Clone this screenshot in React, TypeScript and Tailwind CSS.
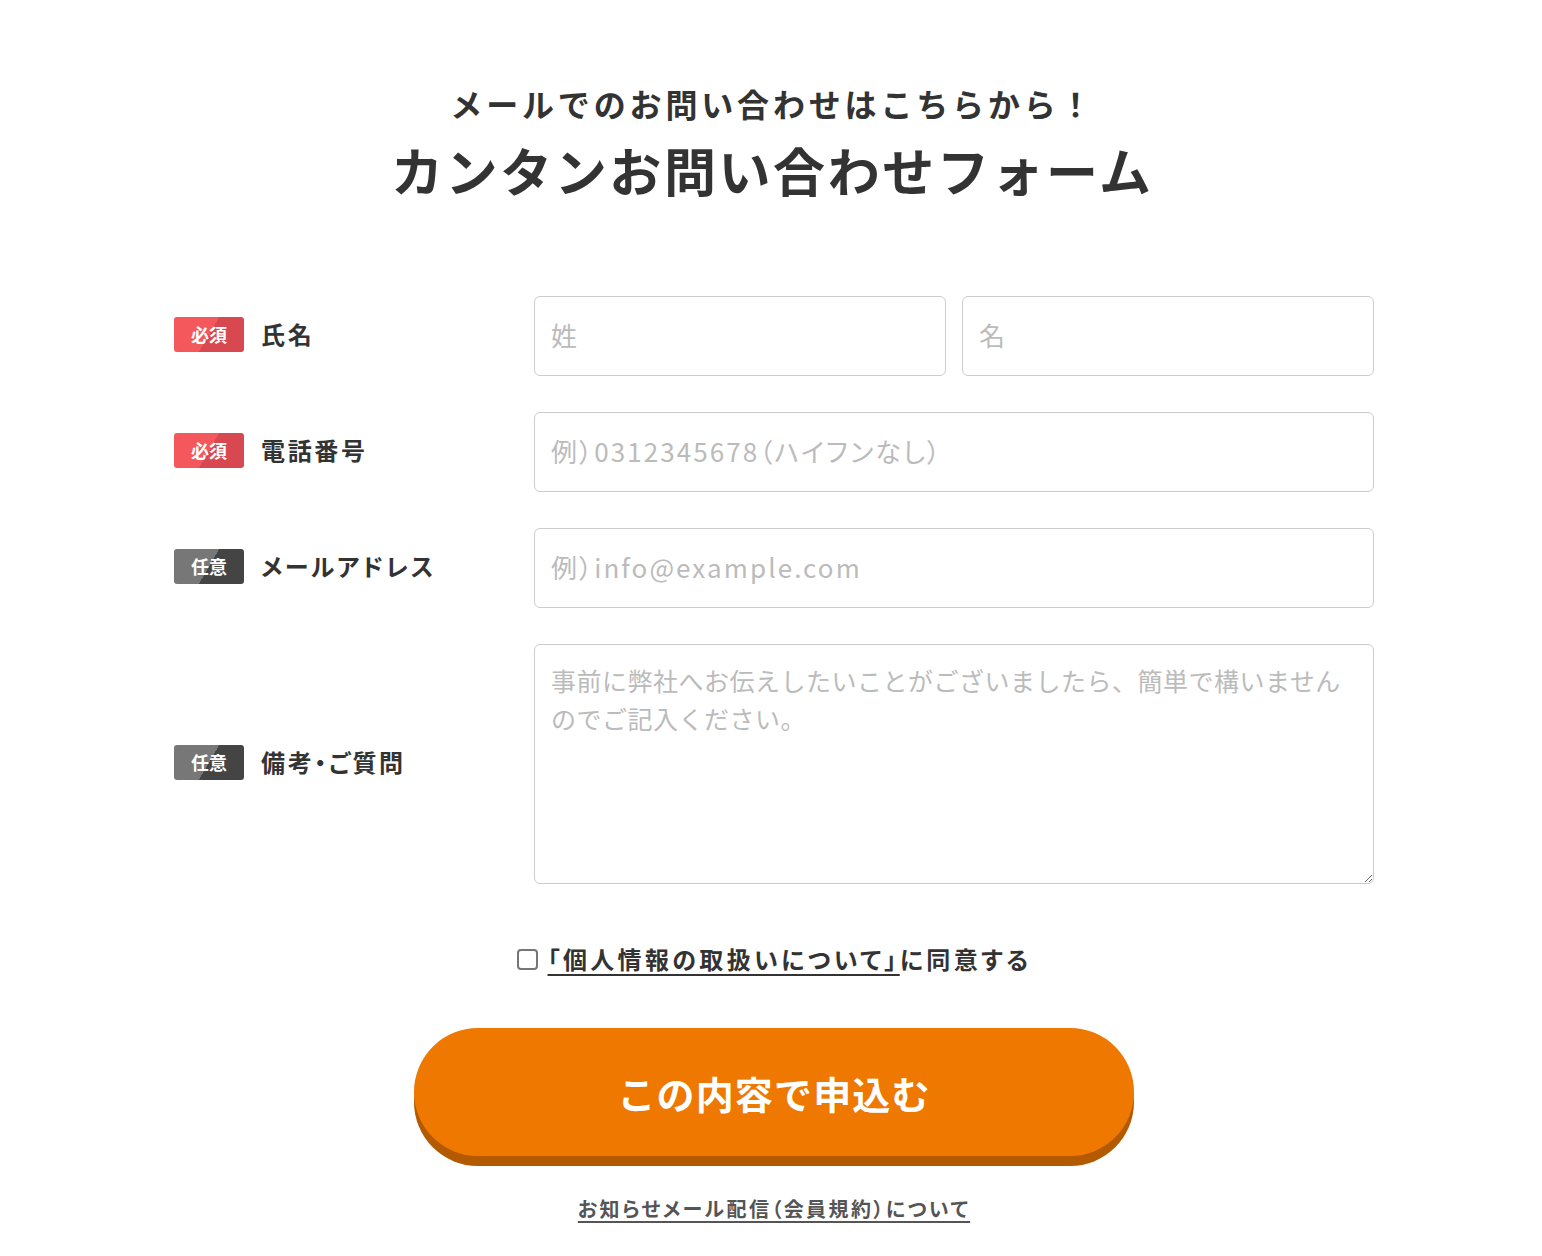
export default function App() {
    const font = { fontFamily: '"Noto Sans CJK JP", "Noto Sans", sans-serif' };
    return (
        <div className="min-h-[1256px] bg-white text-[#333]" style={font}>
            <div className="pt-[78px] text-center">
                <p className="text-[32px] font-bold leading-[50px] tracking-[0.12em] pl-[0.12em]">メールでのお問い合わせはこちらから！</p>
                <h1 className="mt-[7px] text-[52px] font-bold leading-[70px] tracking-[0.05em] pl-[0.05em]">カンタンお問い合わせフォーム</h1>
            </div>

            <div className="mx-auto mt-[91px] w-[1200px] translate-x-[3px] flex flex-col gap-[36px]">
                <Row label="氏名" required>
                    <div className="flex gap-4">
                        <Field placeholder="姓" />
                        <Field placeholder="名" />
                    </div>
                </Row>
                <Row label="電話番号" required>
                    <Field placeholder="例）0312345678（ハイフンなし）" />
                </Row>
                <Row label="メールアドレス">
                    <Field placeholder="例）info@example.com" />
                </Row>
                <Row label="備考・ご質問">
                    <textarea
                        className="block h-[240px] w-full rounded-md border border-[#ccc] px-4 pt-[16px] pb-[18px] text-[25px] leading-[38px] tracking-[0.02em] placeholder:text-[#bbb] outline-none"
                        placeholder="事前に弊社へお伝えしたいことがございましたら、簡単で構いませんのでご記入ください。"
                    />
                </Row>
            </div>

            <div className="mt-[58px] flex items-center justify-center gap-[10px] pl-[6px]">
                <span className="h-[21px] w-[21px] rounded-[4px] border-2 border-[#767676] bg-white" />
                <p className="text-[24px] font-bold leading-[34px] tracking-[0.14em] [font-feature-settings:'palt']">
                    <a className="underline underline-offset-[5px] decoration-2">「個人情報の取扱いについて」</a>に同意する
                </p>
            </div>

            <div className="mt-[52px] flex justify-center">
                <button className="h-[128px] w-[720px] rounded-full bg-[#ee7800] text-[38px] font-bold tracking-[0.03em] text-white shadow-[0_10px_0_#b35900] translate-x-[3px]">
                    この内容で申込む
                </button>
            </div>

            <div className="mt-[38px] text-center pb-8">
                <a className="text-[20px] font-bold leading-[30px] tracking-[0.12em] [font-feature-settings:'palt'] text-[#555] underline underline-offset-4 decoration-2 translate-x-[3px] inline-block">
                    お知らせメール配信（会員規約）について
                </a>
            </div>
        </div>
    );
}

function Row({ label, required, children }: { label: string; required?: boolean; children: React.ReactNode }) {
    return (
        <div className="flex items-center">
            <div className="flex w-[360px] items-center gap-[17px] -translate-y-[2px]">
                <span
                    className={
                        required
                            ? "flex h-[35px] w-[70px] items-center justify-center rounded-[3px] bg-[linear-gradient(120deg,#f4575c_50%,#d84850_50%)] text-[18px] font-bold text-white"
                            : "flex h-[35px] w-[70px] items-center justify-center rounded-[3px] bg-[linear-gradient(120deg,#777_50%,#444_50%)] text-[18px] font-bold text-white"
                    }
                >
                    {required ? "必須" : "任意"}
                </span>
                <span className="text-[24px] font-bold tracking-[0.11em] [font-feature-settings:'palt']">{label}</span>
            </div>
            <div className="flex-1">{children}</div>
        </div>
    );
}

function Field({ placeholder }: { placeholder: string }) {
    return (
        <input
            className="block h-[80px] w-full rounded-md border border-[#ccc] px-4 pb-[4px] text-[26px] tracking-[0.08em] [font-feature-settings:'palt'] placeholder:text-[#bbb] outline-none"
            placeholder={placeholder}
        />
    );
}
